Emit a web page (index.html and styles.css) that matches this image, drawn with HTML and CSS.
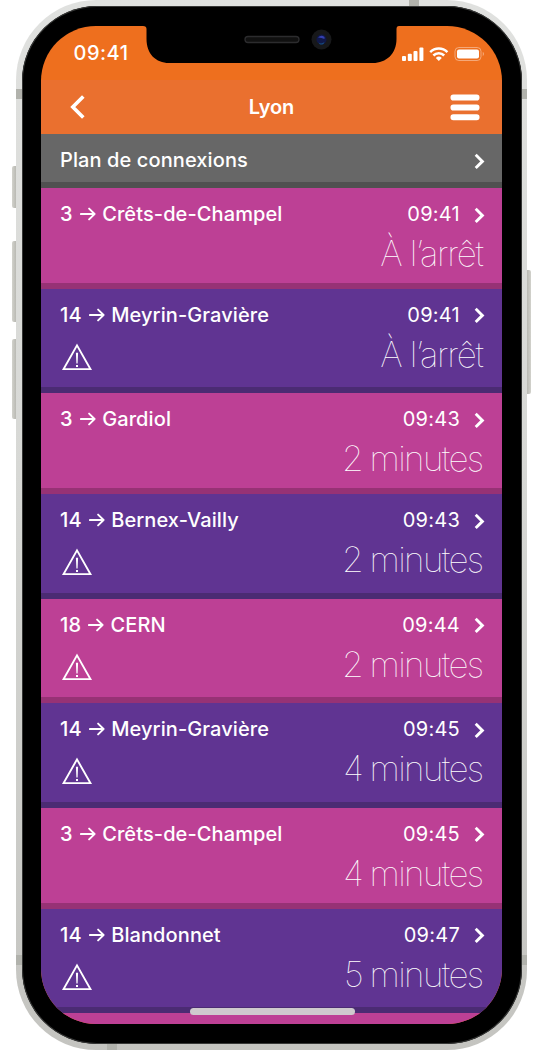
FILE: index.html
```
<!DOCTYPE html>
<html lang="fr">
<head>
<meta charset="utf-8">
<title>Lyon</title>
<link rel="stylesheet" href="styles.css">
</head>
<body>
<svg class="defs" width="0" height="0" aria-hidden="true">
  <symbol id="next" viewBox="0 0 11 17"><path d="M1.7 1.8 8.4 8.4 1.7 15" fill="none" stroke="#fff" stroke-width="2.9"/></symbol>
  <symbol id="arrow" viewBox="0 0 16 14"><path d="M.9 7H14.6M9.1 1.6 14.6 7 9.1 12.4" fill="none" stroke="#fff" stroke-width="1.9" stroke-linecap="round" stroke-linejoin="round"/></symbol>
  <symbol id="alert" viewBox="0 0 32 28"><path d="M16 2.400 29.400 26.100H2.600Z" fill="none" stroke="#fff" stroke-width="1.900"/><path d="M14.900 9.800h2.200l-.5 10.600h-1.200zM15 22h2v2h-2z" fill="#fff"/></symbol>
</svg>
<main class="phone">
  <i class="button silent"></i><i class="button volume-up"></i><i class="button volume-down"></i><i class="button power"></i>
  <i class="band top-left"></i><i class="band top-right"></i><i class="band bottom-left"></i><i class="band bottom-right"></i><i class="band top"></i><i class="band bottom"></i>
  <div class="bezel">
    <div class="screen">
      <svg class="notch" width="256" height="37" viewBox="0 0 256 37">
        <path d="M0 0H256Q253.500 0 253.500 3V13C253.500 28 243 37 230 37H26C13 37 3.500 28 3.500 13V3Q3.500 0 0 0Z" fill="#000"/>
        <rect x="102" y="10.500" width="54" height="6" rx="3" fill="#101010" stroke="#2c2c2e" stroke-width="1.300"/>
        <circle cx="178.500" cy="13.500" r="10" fill="#17181a"/>
        <circle cx="178.500" cy="13.500" r="5" fill="#101848"/>
        <path d="M175 11.500q3-3 6.500-.5v2q-3-1.500-6.500-1.500z" fill="#343fae"/>
        <path d="M175.500 16.500q3 2 6-.5l-1 2q-2.500 1-4 0z" fill="#174d82"/>
      </svg>
      <div class="status">
        <span class="clock">09:41</span>
        <svg width="83" height="16" viewBox="0 0 83 16">
          <g fill="#fff"><rect x="0" y="10" width="4" height="5" rx="1"/><rect x="5.800" y="7.700" width="4" height="7.300" rx="1"/><rect x="11.500" y="5" width="4" height="10" rx="1"/><rect x="17.400" y="1.500" width="4" height="13.500" rx="1"/></g>
          <g fill="none" stroke="#fff" stroke-width="2.500"><path d="M28.200 6.100a12.200 12.200 0 0 1 17.200 0"/><path d="M31.400 9.500a7.600 7.600 0 0 1 10.800 0"/></g>
          <path d="M36.800 14.900 33.800 11.900a4.300 4.300 0 0 1 6 0z" fill="#fff"/>
          <rect x="53" y="1.500" width="26" height="13" rx="3.800" fill="none" stroke="#fff" stroke-opacity=".4"/>
          <rect x="55" y="3.500" width="22" height="9" rx="2" fill="#fff"/>
          <path d="M80.800 5.800q2 2.200 0 4.400z" fill="#fff" fill-opacity=".5"/>
        </svg>
      </div>
      <header class="bar">
        <svg width="17" height="26" viewBox="0 0 17 26"><path d="M14.300 2.500 3.800 13 14.300 23.500" fill="none" stroke="#fff" stroke-width="3.600"/></svg>
        <h1>Lyon</h1>
        <svg width="30" height="27" viewBox="0 0 30 27" fill="#fff"><rect x=".5" y=".5" width="29" height="6" rx="2.800"/><rect x=".5" y="10.500" width="29" height="6" rx="2.800"/><rect x=".5" y="20.300" width="29" height="6" rx="2.800"/></svg>
      </header>
      <div class="plan"><span class="line">Plan de connexions</span><svg class="next"><use href="#next"/></svg></div>

      <section class="row pink">
        <div class="head"><span class="line">3<svg class="arrow"><use href="#arrow"/></svg>Crêts-de-Champel</span><time>09:41</time><svg class="next"><use href="#next"/></svg></div>
        <p class="wait stop">À l’arrêt</p>
      </section>
      <section class="row violet tall">
        <div class="head"><span class="line">14<svg class="arrow"><use href="#arrow"/></svg>Meyrin-Gravière</span><time>09:41</time><svg class="next"><use href="#next"/></svg></div>
        <div class="foot"><svg class="alert"><use href="#alert"/></svg><p class="wait stop">À l’arrêt</p></div>
      </section>
      <section class="row pink">
        <div class="head"><span class="line">3<svg class="arrow"><use href="#arrow"/></svg>Gardiol</span><time>09:43</time><svg class="next"><use href="#next"/></svg></div>
        <p class="wait">2 minutes</p>
      </section>
      <section class="row violet tall">
        <div class="head"><span class="line">14<svg class="arrow"><use href="#arrow"/></svg>Bernex-Vailly</span><time>09:43</time><svg class="next"><use href="#next"/></svg></div>
        <div class="foot"><svg class="alert"><use href="#alert"/></svg><p class="wait">2 minutes</p></div>
      </section>
      <section class="row pink tall">
        <div class="head"><span class="line">18<svg class="arrow"><use href="#arrow"/></svg>CERN</span><time>09:44</time><svg class="next"><use href="#next"/></svg></div>
        <div class="foot"><svg class="alert"><use href="#alert"/></svg><p class="wait">2 minutes</p></div>
      </section>
      <section class="row violet tall">
        <div class="head"><span class="line">14<svg class="arrow"><use href="#arrow"/></svg>Meyrin-Gravière</span><time>09:45</time><svg class="next"><use href="#next"/></svg></div>
        <div class="foot"><svg class="alert"><use href="#alert"/></svg><p class="wait">4 minutes</p></div>
      </section>
      <section class="row pink">
        <div class="head"><span class="line">3<svg class="arrow"><use href="#arrow"/></svg>Crêts-de-Champel</span><time>09:45</time><svg class="next"><use href="#next"/></svg></div>
        <p class="wait">4 minutes</p>
      </section>
      <section class="row violet tall">
        <div class="head"><span class="line">14<svg class="arrow"><use href="#arrow"/></svg>Blandonnet</span><time>09:47</time><svg class="next"><use href="#next"/></svg></div>
        <div class="foot"><svg class="alert"><use href="#alert"/></svg><p class="wait">5 minutes</p></div>
      </section>
      <section class="row pink"></section>
      <div class="home"></div>
    </div>
  </div>
</main>
</body>
</html>
```
FILE: styles.css
```
* { box-sizing: border-box; }
body { margin: 0; background: #fff; color: #fff; font-family: Inter, sans-serif; overflow: hidden; }
.defs { position: absolute; }
.phone {
  position: relative;
  width: 511px;
  height: 1050px;
  margin-left: 16px;
  padding: 6px 5.5px;
  border-radius: 80px;
  background: linear-gradient(#e0e1df, #d7d8d5 45%, #c4c4c0);
}
.bezel {
  position: relative;
  height: 1038px;
  padding: 20px 19.5px;
  border-radius: 75px;
  background: #000;
  box-shadow: inset 0 0 0 1px #363736;
}
.screen {
  position: relative;
  height: 998px;
  overflow: hidden;
  border-radius: 55px;
  background: #ee6f1e;
}
.button { position: absolute; width: 4px; background: linear-gradient(90deg, #d2d2cc, #b9b9b3); }
.silent { left: -4px; top: 166px; height: 42px; border-radius: 2px 0 0 2px; }
.volume-up { left: -4px; top: 241px; height: 81px; border-radius: 2px 0 0 2px; }
.volume-down { left: -4px; top: 339px; height: 80px; border-radius: 2px 0 0 2px; }
.power { right: -4px; top: 270px; height: 124px; border-radius: 0 2px 2px 0; background: linear-gradient(90deg, #b9b9b3, #d2d2cc); }
.band { position: absolute; width: 6px; height: 10px; background: #b1b2ac; }
.top-left { left: 0; top: 89px; }
.top-right { right: 0; top: 89px; }
.bottom-left { left: 0; top: 955px; }
.bottom-right { right: 0; top: 955px; }
.top { left: 393px; top: 0; width: 10px; height: 6px; }
.bottom { left: 91px; bottom: 0; width: 10px; height: 6px; }
.notch { position: absolute; left: 102px; top: 0; }
.status {
  display: flex;
  justify-content: space-between;
  height: 54px;
  padding: 14px 17.5px 0 32.5px;
}
.status svg { margin-top: 6px; }
.clock { font-size: 20px; line-height: 26px; font-weight: 500; letter-spacing: .5px; }
.bar {
  display: flex;
  align-items: center;
  justify-content: space-between;
  height: 54px;
  padding: 0 22.5px 0 27.5px;
  background: #ea702f;
}
h1 { margin: 0 0 0 8px; font-size: 20px; font-weight: 600; line-height: 26px; letter-spacing: -.1px; }
.plan {
  display: flex;
  justify-content: space-between;
  height: 54px;
  padding: 13px 17.5px 0 19px;
  background: #676767;
  border-bottom: 6px solid #505050;
}
.line { font-size: 20px; line-height: 26px; font-weight: 550; letter-spacing: .1px; white-space: nowrap; }
.next { width: 11px; height: 17px; margin-top: 5.5px; }
.row { height: 100.8px; padding: 13px 17.5px 0 19px; border-bottom: 6px solid; }
.tall { height: 104.6px; }
.pink { background: #bd4095; border-color: #973275; }
.violet { background: #603492; border-color: #4b2b73; }
.head { display: flex; }
.head time { margin-left: auto; margin-right: 13.5px; font-size: 20px; line-height: 26px; letter-spacing: .25px; }
.arrow { width: 16px; height: 14px; margin: 0 6.500px 0 7px; vertical-align: 0; }
.foot { display: flex; justify-content: space-between; }
.alert { width: 32px; height: 28px; margin: 15px 0 0 1px; }
.wait { margin: 5px 2px 0 0; font-size: 35px; line-height: 42px; font-weight: 100; text-align: right; letter-spacing: -1.6px; word-spacing: -1px; white-space: nowrap; }
.stop { letter-spacing: -1.3px; word-spacing: 0; }
.home {
  position: absolute;
  left: 148.500px;
  bottom: 9.500px;
  width: 165px;
  height: 6.500px;
  border-radius: 4px;
  background: #cfcace;
}
```
